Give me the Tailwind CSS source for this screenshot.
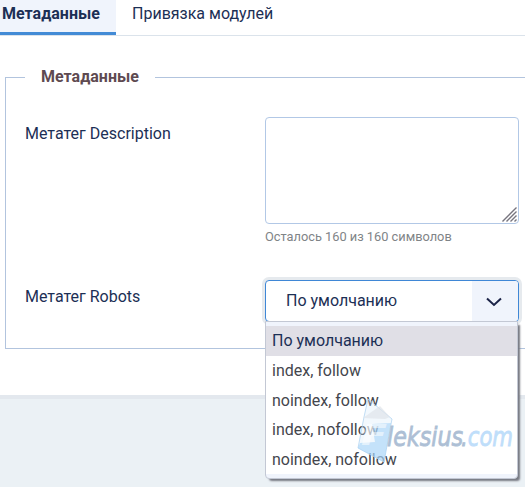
<!DOCTYPE html>
<html lang="ru">
<head>
  <meta charset="UTF-8" />
  <meta name="viewport" content="width=device-width, initial-scale=1.0" />
  <title>Метаданные</title>
  <script src="https://cdn.jsdelivr.net/npm/@tailwindcss/browser@4"></script>
</head>
<body class="bg-[#ebf1f5] font-['Roboto',sans-serif] text-base text-[#1c2f55]">
  <div class="relative h-screen overflow-hidden">
    <main class="h-[395px] bg-white shadow-[0_4px_0_#e3e8ee]">
      <!-- Tabs -->
      <nav class="flex h-9 border-b border-[#dbe3eb]">
        <a class="w-[116px] h-[35px] pl-0.5 pt-0.5 bg-[#f0f4fc] border-b-3 border-[#438bd6] font-bold leading-6">Метаданные</a>
        <a class="pl-4 pt-0.5 leading-6">Привязка модулей</a>
      </nav>

      <fieldset class="mt-[29px] ml-[5px] w-[540px] h-[284px] border border-[#b2c4de] pl-[19px]">
        <legend class="px-4 font-bold leading-6 text-[#5e4a51]">Метаданные</legend>

        <div class="flex pt-7">
          <label for="metadesc" class="w-60 pt-[5px] leading-6">Метатег Description</label>
          <div>
            <div class="relative w-[254px] h-[107px]">
              <textarea id="metadesc" class="block w-full h-full resize-none rounded border border-[#b2c8e6] bg-white"></textarea>
              <svg class="absolute right-0.5 bottom-0.5" width="15" height="15" viewBox="0 0 15 15" fill="none" stroke="#77757f" stroke-width="1.4">
                <path d="M.5 14.5 14.5.5M4.5 14.5l10-10M8.5 14.5l6-6M12.5 14.5l2-2" />
              </svg>
            </div>
            <p class="pt-[3px] text-[12.8px] leading-5 text-[#7f8487]">Осталось 160 из 160 символов</p>
          </div>
        </div>

        <div class="flex pt-[33px]">
          <label class="w-60 pt-[5px] leading-6">Метатег Robots</label>
          <div class="relative w-[254px]">
            <div class="flex h-[42px] rounded border border-[#3f87d6] bg-white shadow-[0_0_0_3px_#e6eaee] overflow-hidden">
              <span class="grow pl-5 leading-10">По умолчанию</span>
              <span class="flex w-[46px] items-center justify-center bg-[#f0f4fc]">
                <svg class="mt-0.5 mr-0.5" width="16" height="10" viewBox="0 0 16 10" fill="none" stroke="#1c2448" stroke-width="2">
                  <path d="M1 1.5l7 6.5 7-6.5" />
                </svg>
              </span>
            </div>

            <!-- Dropdown list -->
            <ul class="absolute left-0 top-[41px] w-[253px] h-[158px] pt-1 rounded-b border border-[#c3c8d4] bg-[#f0f4fc] shadow-[3px_3px_2px_-1px_#777982] text-[#44464d] leading-[29px]">
              <li class="h-[30px] pl-1.5 bg-[#e0dfe6] text-[#1c2f55]">По умолчанию</li>
              <li class="h-[30px] pl-1.5 bg-white">index, follow</li>
              <li class="h-[29px] pl-1.5 bg-white">noindex, follow</li>
              <li class="h-[30px] pl-1.5 bg-white">index, nofollow</li>
              <li class="h-[29px] pl-1.5 bg-white">noindex, nofollow</li>
            </ul>
          </div>
        </div>
      </fieldset>
    </main>

    <!-- Watermark -->
    <svg class="absolute left-[350px] top-[395px]" width="175" height="80" viewBox="0 0 175 80">
      <path d="M18 4 42 24 34 67 8 53 14 22z" fill="#d3e8fa" fill-opacity=".3" stroke="#b3d6f3" stroke-opacity=".8" />
      <path d="M13 23 30 11 40 22 35 24z" fill="#dfe4e9" fill-opacity=".7" />
      <path d="M22 29 41 28 34 67 8 53 10 48 25 47z" fill="#9fcff8" fill-opacity=".55" />
      <text x="11" y="50" textLength="26" lengthAdjust="spacingAndGlyphs" font-family="DejaVu Sans" font-size="28" font-weight="bold" font-style="italic" fill="#fff" fill-opacity=".55">F</text>
      <text x="37" y="51" textLength="76" lengthAdjust="spacingAndGlyphs" font-family="DejaVu Sans" font-size="26" font-style="italic" fill="#adbfd5" stroke="#adbfd5" stroke-width=".8">leksius</text>
      <text x="111" y="51" textLength="52" lengthAdjust="spacingAndGlyphs" font-family="DejaVu Sans" font-size="26" font-style="italic" fill="#bfdefa" stroke="#bfdefa" stroke-width=".8"><tspan fill="#adbfd5" stroke="#adbfd5">.</tspan>com</text>
    </svg>
  </div>
</body>
</html>
